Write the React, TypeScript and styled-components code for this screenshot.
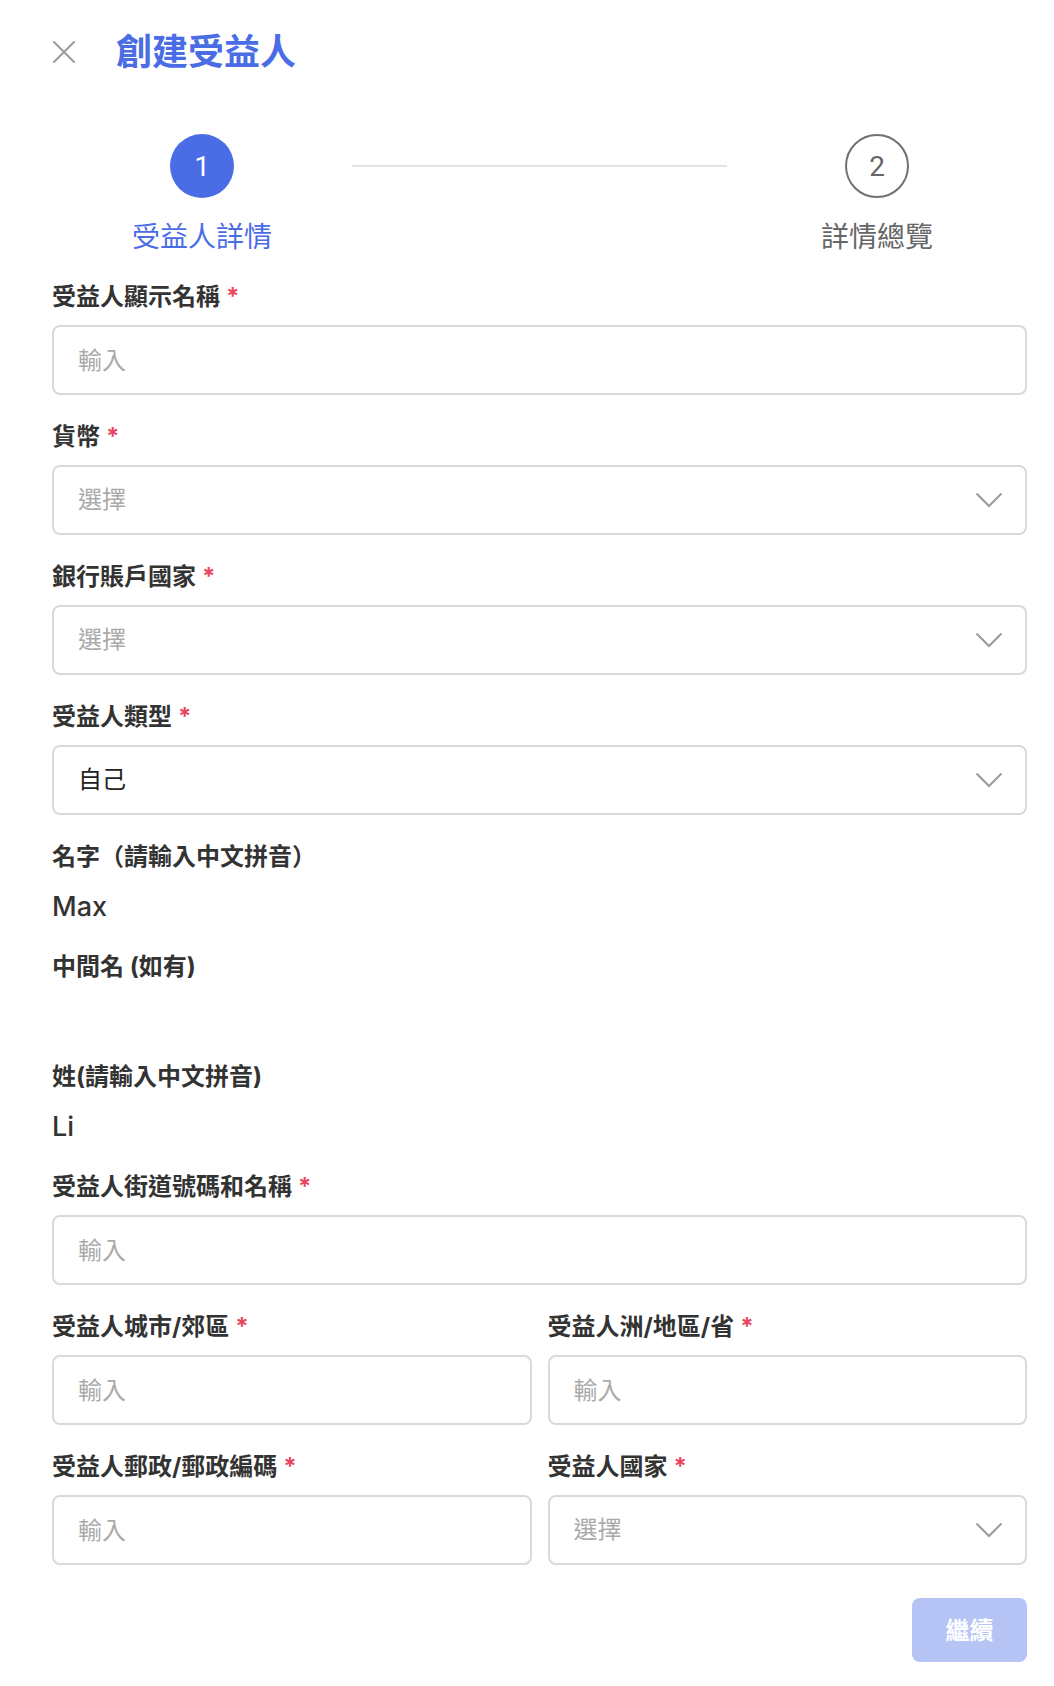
import styled, { createGlobalStyle } from "styled-components";

const GlobalStyle = createGlobalStyle`
  html, body {
    margin: 0;
    padding: 0;
    background: #ffffff;
  }
  * {
    box-sizing: border-box;
  }
`

const font = `Inter, "Noto Sans CJK TC", "Noto Sans CJK SC", sans-serif`

type Option = { label: string; required?: boolean }

export default function App() {
    return (
        <>
            <GlobalStyle/>
            <Page>
                <Header>
                    <CloseButton aria-label="close">
                        <svg width="24" height="24" viewBox="0 0 24 24">
                            <path d="M1.5 1.5 L22.5 22.5 M22.5 1.5 L1.5 22.5" stroke="#9a9a9a" strokeWidth="2" fill="none"/>
                        </svg>
                    </CloseButton>
                    <Title>創建受益人</Title>
                </Header>

                <Stepper>
                    <Step>
                        <Circle active>1</Circle>
                        <StepLabel active>受益人詳情</StepLabel>
                    </Step>
                    <StepLine/>
                    <Step>
                        <Circle>2</Circle>
                        <StepLabel>詳情總覽</StepLabel>
                    </Step>
                </Stepper>

                <Form>
                    <Field>
                        <FieldLabel label="受益人顯示名稱" required/>
                        <Input placeholder="輸入"/>
                    </Field>
                    <Field>
                        <FieldLabel label="貨幣" required/>
                        <Select placeholder="選擇"/>
                    </Field>
                    <Field>
                        <FieldLabel label="銀行賬戶國家" required/>
                        <Select placeholder="選擇"/>
                    </Field>
                    <Field>
                        <FieldLabel label="受益人類型" required/>
                        <Select placeholder="選擇" value="自己"/>
                    </Field>
                    <Field>
                        <FieldLabel label="名字（請輸入中文拼音）"/>
                        <Value>Max</Value>
                    </Field>
                    <Field>
                        <FieldLabel label="中間名 (如有)"/>
                        <Value></Value>
                    </Field>
                    <Field>
                        <FieldLabel label="姓(請輸入中文拼音)"/>
                        <Value>Li</Value>
                    </Field>
                    <Field>
                        <FieldLabel label="受益人街道號碼和名稱" required/>
                        <Input placeholder="輸入"/>
                    </Field>
                    <Row>
                        <Field>
                            <FieldLabel label="受益人城市/郊區" required/>
                            <Input placeholder="輸入"/>
                        </Field>
                        <Field>
                            <FieldLabel label="受益人洲/地區/省" required/>
                            <Input placeholder="輸入"/>
                        </Field>
                    </Row>
                    <Row>
                        <Field>
                            <FieldLabel label="受益人郵政/郵政編碼" required/>
                            <Input placeholder="輸入"/>
                        </Field>
                        <Field>
                            <FieldLabel label="受益人國家" required/>
                            <Select placeholder="選擇"/>
                        </Field>
                    </Row>
                    <Footer>
                        <SubmitButton disabled>繼續</SubmitButton>
                    </Footer>
                </Form>
            </Page>
        </>
    )
}

const FieldLabel = ({label, required}: Option) => (
    <Label>
        {label}
        {required && <Required>*</Required>}
    </Label>
)

const Select = ({placeholder, value}: { placeholder: string; value?: string }) => (
    <SelectBox role="combobox">
        <SelectText filled={!!value}>{value ?? placeholder}</SelectText>
        <svg width="28" height="16" viewBox="0 0 28 16">
            <polyline points="1.5,1.5 14,14 26.5,1.5" stroke="#9a9a9a" strokeWidth="2" fill="none"/>
        </svg>
    </SelectBox>
)

const Page = styled.div`
  width: 1054px;
  padding: 26px 27px 24px 52px;
  font-family: ${font};
  color: #333333;
`

const Header = styled.div`
  display: flex;
  align-items: center;
  gap: 40px;
  height: 52px;
`

const CloseButton = styled.button`
  display: flex;
  padding: 0;
  border: none;
  background: none;
  cursor: pointer;
`

const Title = styled.h1`
  margin: 0;
  font-size: 36px;
  line-height: 1;
  font-weight: 700;
  color: #4a6de6;
`

const Stepper = styled.div`
  display: flex;
  margin-top: 56px;
`

const Step = styled.div`
  width: 300px;
  display: flex;
  flex-direction: column;
  align-items: center;
`

const Circle = styled.div<{ active?: boolean }>`
  width: 64px;
  height: 64px;
  border-radius: 50%;
  display: flex;
  align-items: center;
  justify-content: center;
  font-size: 28px;
  font-family: Roboto, sans-serif;
  background: ${p => p.active ? '#4a6de6' : '#ffffff'};
  color: ${p => p.active ? '#ffffff' : '#666666'};
  border: ${p => p.active ? 'none' : '2px solid #707070'};
`

const StepLabel = styled.div<{ active?: boolean }>`
  margin-top: 21px;
  font-size: 28px;
  line-height: 36px;
  color: ${p => p.active ? '#4a6de6' : '#666666'};
`

const StepLine = styled.div`
  flex: 1;
  height: 2px;
  margin-top: 31px;
  background: #e3e3e3;
`

const Form = styled.form`
  display: flex;
  flex-direction: column;
  margin-top: 26px;
`

const Field = styled.div`
  display: flex;
  flex-direction: column;
  margin-bottom: 26px;
`

const Row = styled.div`
  display: grid;
  grid-template-columns: 1fr 1fr;
  column-gap: 16px;
`

const Label = styled.label`
  font-size: 24px;
  line-height: 32px;
  font-weight: 700;
  color: #333333;
  margin-bottom: 12px;
`

const Required = styled.span`
  color: #e8475f;
  margin-left: 6px;
`

const Input = styled.input`
  height: 70px;
  width: 100%;
  border: 2px solid #d9d9d9;
  border-radius: 8px;
  padding: 0 24px;
  font-size: 24px;
  font-family: ${font};
  color: #333333;
  outline: none;

  &::placeholder {
    color: #aaaaaa;
  }
`

const SelectBox = styled.div`
  height: 70px;
  display: flex;
  align-items: center;
  justify-content: space-between;
  border: 2px solid #d9d9d9;
  border-radius: 8px;
  padding: 0 22px 0 24px;
`

const SelectText = styled.span<{ filled: boolean }>`
  font-size: 24px;
  line-height: 30px;
  margin-top: -1px;
  color: ${p => p.filled ? '#222222' : '#aaaaaa'};
`

const Value = styled.div`
  height: 40px;
  font-size: 27px;
  font-weight: 500;
  line-height: 44px;
  color: #333333;
`

const Footer = styled.div`
  display: flex;
  justify-content: flex-end;
  margin-top: 7px;
`

const SubmitButton = styled.button`
  width: 115px;
  height: 64px;
  padding: 0 0 4px;
  border: none;
  border-radius: 8px;
  background: #b5c4f5;
  color: #ffffff;
  font-size: 24px;
  font-weight: 700;
  font-family: ${font};
`
